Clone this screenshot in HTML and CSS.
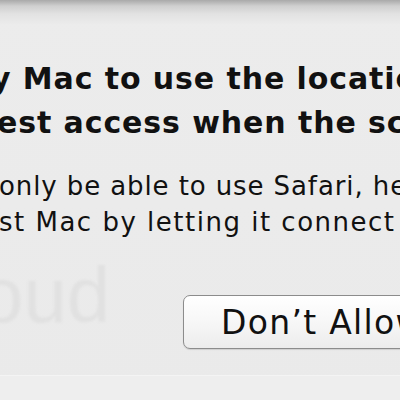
FILE: index.html
```html
<!DOCTYPE html>
<html>
<head>
<meta charset="utf-8">
<link rel="stylesheet" href="styles.css">
</head>
<body>
<div class="dialog">
  <div class="topshade"></div>
  <div class="title">
    <div class="line l1">y Mac to use the location of this Mac</div>
    <div class="line l2">est access when the screen is locked?</div>
  </div>
  <div class="info">
    <div class="line l3">only be able to use Safari, helping you</div>
    <div class="line l4">st Mac by letting it connect to Wi-Fi.</div>
  </div>
  <div class="actions">
    <div class="ghost">oud</div>
    <button class="btn">Don’t Allow</button>
  </div>
  <div class="footer"></div>
</div>
</body>
</html>
```
FILE: styles.css
```css
html, body {
  margin: 0;
  padding: 0;
}
body {
  width: 400px;
  height: 400px;
  overflow: hidden;
  background: #ebebeb;
}
.dialog {
  width: 400px;
  height: 400px;
  overflow: hidden;
  display: flex;
  flex-direction: column;
  background: linear-gradient(#ececec, #eaeaea);
  font-family: "DejaVu Sans", sans-serif;
  color: #111;
}
.topshade {
  height: 24px;
  flex: none;
  background: linear-gradient(#a9a9a9 0px, #cfcfcf 6px, #e2e2e2 14px, #ebebeb 24px);
}
.line {
  white-space: nowrap;
}
.title {
  margin-top: 33px;
  font-weight: bold;
  font-size: 30px;
  line-height: 44px;
  letter-spacing: 0.9px;
}
.l1 { margin-left: -9px; }
.l2 { margin-left: -3px; }
.info {
  margin-top: 23px;
  font-size: 26px;
  line-height: 36px;
}
.l3 { margin-left: -1px; letter-spacing: 0.9px; }
.l4 { margin-left: -1px; letter-spacing: 1.5px; }
.actions {
  display: flex;
  align-items: flex-start;
  margin-top: 16px;
  height: 119px;
  flex: none;
}
.ghost {
  flex: none;
  width: 203px;
  margin-left: -20px;
  font-family: "Liberation Sans", sans-serif;
  font-size: 78px;
  line-height: 78px;
  color: #e1e1e1;
  filter: blur(1.2px);
}
.btn {
  flex: none;
  margin-top: 39px;
  width: 260px;
  height: 54px;
  padding: 0 0 0 37px;
  text-align: left;
  border: 1px solid #8c8c8c;
  border-radius: 7px;
  background: linear-gradient(#ffffff, #f7f7f7 50%, #ececec);
  box-shadow: 0 1px 1px rgba(0,0,0,0.12);
  font-family: "DejaVu Sans", sans-serif;
  font-size: 33px;
  letter-spacing: 1.3px;
  color: #111;
}
.footer {
  flex: none;
  height: 30px;
  border-top: 1px solid #f4f4f4;
  background: #eeeeee;
}
```
